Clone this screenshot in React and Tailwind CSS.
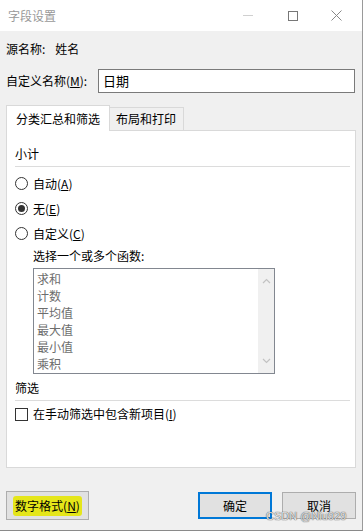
import React from 'react';

const font = { fontFamily: '"Microsoft YaHei", "Noto Sans CJK SC", "Noto Sans", sans-serif' };

const Radio = ({ checked, label, hot }) => (
  <div className="flex items-center h-[25px]">
    <span className="w-[13px] h-[13px] rounded-full border border-[#333] bg-white flex items-center justify-center">
      {checked && <span className="w-[7px] h-[7px] rounded-full bg-[#333]" />}
    </span>
    <span className="ml-[5px]">
      {label}(<span className="underline">{hot}</span>)
    </span>
  </div>
);

const Chevron = ({ up }) => (
  <svg width="9" height="6" viewBox="0 0 9 6" className="block">
    <path d={up ? 'M1 5L4.5 1.5L8 5' : 'M1 1L4.5 4.5L8 1'} fill="none" stroke="#c2c2c2" strokeWidth="1.2" />
  </svg>
);

const App = () => {
  const funcs = ['求和', '计数', '平均值', '最大值', '最小值', '乘积'];

  return (
    <div className="relative w-[363px] h-[531px] bg-[#f0f0f0] text-[12px] leading-[16px] text-black border-r border-[#9a9a9a] border-b border-b-[#8a8a8a] overflow-hidden" style={font}>
      {/* title bar */}
      <div className="h-[31px] bg-white flex items-center pl-[8px]">
        <span className="text-[#999999]">字段设置</span>
        <div className="ml-auto flex items-center h-full">
          <div className="w-[10px] h-px bg-[#d0d0d0] mr-[35px]" />
          <div className="w-[10px] h-[10px] border border-[#777] mr-[33px]" />
          <svg width="11" height="11" viewBox="0 0 11 11" className="mr-[20px]">
            <path d="M0.5 0.5L10.5 10.5M10.5 0.5L0.5 10.5" stroke="#888" strokeWidth="1" />
          </svg>
        </div>
      </div>

      <div className="px-[6px]">
        <div className="mt-[10px] flex">
          <span>源名称:</span>
          <span className="ml-[10px]">姓名</span>
        </div>

        <div className="mt-[12px] flex items-center">
          <span className="w-[92px]">
            自定义名称(<span className="underline">M</span>):
          </span>
          <div className="w-[257px] h-[24px] border border-[#7a7a7a] bg-white flex items-center pl-[4px] text-[13px]">日期</div>
        </div>

        {/* tabs */}
        <div className="mt-[12px] flex items-start">
          <div className="relative z-10 w-[104px] h-[26px] bg-white border border-b-0 border-[#d9d9d9] flex items-center justify-center -mb-px">
            分类汇总和筛选
          </div>
          <div className="w-[74px] h-[24px] mt-[2px] bg-[#f0f0f0] border border-l-0 border-[#d9d9d9] flex items-center justify-center pr-[1px]">
            布局和打印
          </div>
        </div>

        <div className="h-[338px] bg-white border border-[#d9d9d9] -mt-px pl-[8px] pr-[5px]">
          <div className="mt-[15px]">小计</div>
          <div className="mt-[4px] h-px bg-[#dcdcdc]" />
          <div className="mt-[4px]">
            <Radio label="自动" hot="A" />
            <Radio checked label="无" hot="E" />
            <Radio label="自定义" hot="C" />
          </div>

          <div className="pl-[18px]">
            <div className="mt-[2px]">选择一个或多个函数:</div>
            <div className="mt-[4px] w-[242px] h-[106px] border border-[#828790] bg-white flex">
              <div className="flex-1 pl-[3px] pt-[1px] text-[#6d6d6d]">
                {funcs.map((f) => (
                  <div key={f} className="h-[17px] leading-[17px]">{f}</div>
                ))}
              </div>
              <div className="w-[16px] bg-[#f0f0f0] flex flex-col items-center justify-between py-[9px]">
                <Chevron up />
                <Chevron />
              </div>
            </div>
          </div>

          <div className="mt-[6px]">筛选</div>
          <div className="mt-[4px] h-px bg-[#dcdcdc]" />
          <div className="mt-[5px] flex items-center">
            <span className="w-[13px] h-[13px] border border-[#333] bg-white" />
            <span className="ml-[5px]">
              在手动筛选中包含新项目(<span className="underline">I</span>)
            </span>
          </div>
        </div>

        {/* buttons */}
        <div className="mt-[23px] flex items-center">
          <div className="w-[83px] h-[29px] border border-[#adadad] bg-[#e1e1e1] flex items-center justify-center">
            <span className="bg-[#e5e61a] px-[2px] leading-[20px] rounded-[3px]">
              数字格式(<span className="underline">N</span>)
            </span>
          </div>
          <div className="ml-auto w-[74px] h-[27px] border-2 border-[#0078d7] bg-[#e1e1e1] flex items-center justify-center">
            确定
          </div>
          <div className="ml-[10px] w-[74px] h-[27px] border border-[#adadad] bg-[#e1e1e1] flex items-center justify-center">
            取消
          </div>
        </div>
      </div>

      {/* watermark */}
      <div className="absolute left-[266px] top-[511px] text-[11px] leading-[11px] text-[rgba(255,255,255,0.85)] [text-shadow:0_0_1px_#555,0_0_1px_#555]" style={{ fontFamily: '"Liberation Sans", Arial, sans-serif' }}>
        CSDN @Niu929
      </div>
    </div>
  );
};

export default App;
